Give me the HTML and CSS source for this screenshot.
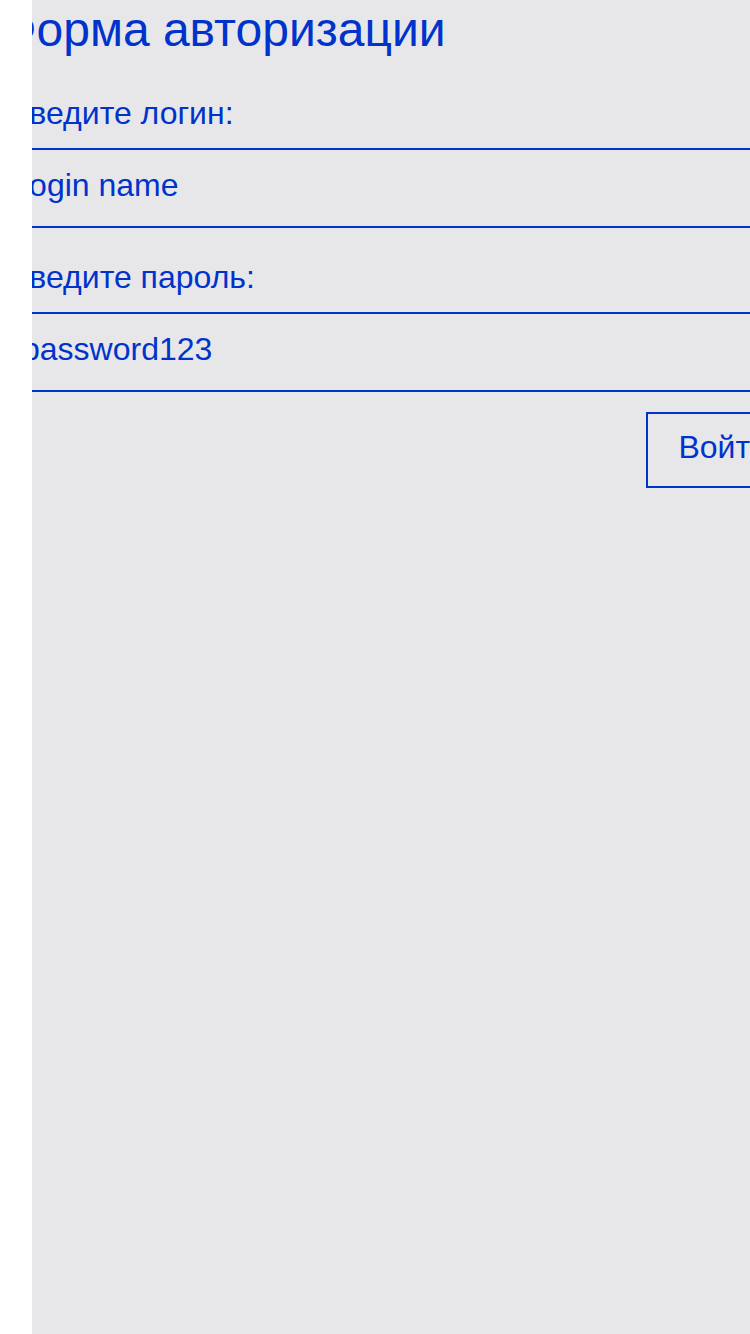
FILE: index.html
```html
<!DOCTYPE html>
<html lang="ru">
<head>
<meta charset="utf-8">
<title>Форма авторизации</title>
<link rel="stylesheet" href="styles.css">
</head>
<body>
<div class="screen">
  <form class="auth-form">
    <h1 class="auth-title">Форма авторизации</h1>
    <label class="field-label" for="login">Введите логин:</label>
    <input class="field-input" id="login" type="text" value="login name">
    <label class="field-label field-label-second" for="password">Введите пароль:</label>
    <input class="field-input" id="password" type="text" value="password123">
    <div class="actions">
      <button class="submit-btn" type="button">Войти</button>
    </div>
  </form>
</div>
</body>
</html>
```
FILE: styles.css
```css
html, body {
  margin: 0;
  padding: 0;
  background: #ffffff;
}

.screen {
  margin-left: 32px;
  height: 1334px;
  background: #e7e7ea;
  overflow: hidden;
}

.auth-form {
  margin-left: -24px;
  width: 792px;
  display: flex;
  flex-direction: column;
  font-family: "Liberation Sans", Arial, sans-serif;
  color: #0033cc;
}

.auth-title {
  margin: 2px 0 35px -8px;
  font-size: 48px;
  line-height: 56px;
  font-weight: normal;
}

.field-label {
  display: block;
  font-size: 32px;
  line-height: 40px;
  margin-bottom: 15px;
}

.field-label-second {
  margin-top: 29px;
}

.field-input {
  display: block;
  box-sizing: border-box;
  width: 100%;
  height: 80px;
  margin: 0;
  padding: 15px 0 21px 14px;
  border: none;
  border-top: 2px solid #0033cc;
  border-bottom: 2px solid #0033cc;
  background: transparent;
  font-family: "Liberation Sans", Arial, sans-serif;
  font-size: 32px;
  line-height: 40px;
  color: #0033cc;
  outline: none;
}

.actions {
  display: flex;
  justify-content: flex-end;
  margin-top: 20px;
}

.submit-btn {
  box-sizing: border-box;
  height: 76px;
  margin: 0;
  padding: 13px 30px 19px 30px;
  border: 2px solid #0033cc;
  background: transparent;
  font-family: "Liberation Sans", Arial, sans-serif;
  font-size: 32px;
  line-height: 40px;
  color: #0033cc;
}
```
